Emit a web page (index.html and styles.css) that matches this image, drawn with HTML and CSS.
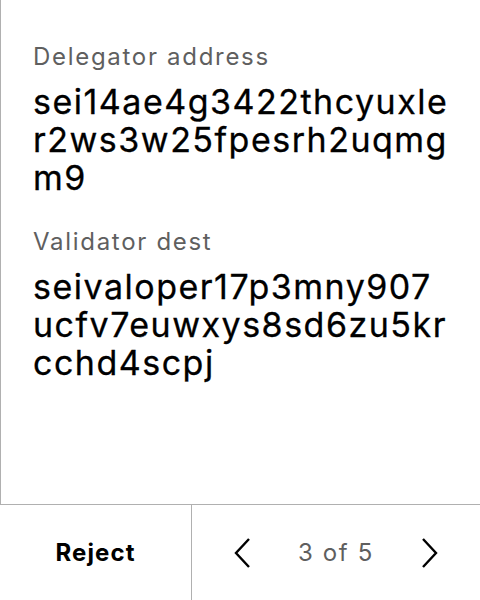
FILE: index.html
```html
<!DOCTYPE html>
<html>
<head>
<meta charset="utf-8">
<link rel="stylesheet" href="styles.css">
</head>
<body>
<div class="screen">
  <main class="content">
    <section class="field">
      <div class="label">Delegator address</div>
      <div class="value">sei14ae4g3422thcyuxler2ws3w25fpesrh2uqmgm9</div>
    </section>
    <section class="field">
      <div class="label">Validator dest</div>
      <div class="value">seivaloper17p3mny907ucfv7euwxys8sd6zu5krcchd4scpj</div>
    </section>
  </main>
  <footer class="footer">
    <button class="reject">Reject</button>
    <div class="pager">
      <svg class="chev" width="16" height="30" viewBox="0 0 16 30"><path d="M15 1 L2 15 L15 29" fill="none" stroke="#000" stroke-width="2.4"/></svg>
      <span class="count">3 of 5</span>
      <svg class="chev" width="16" height="30" viewBox="0 0 16 30"><path d="M1 1 L14 15 L1 29" fill="none" stroke="#000" stroke-width="2.4"/></svg>
    </div>
  </footer>
</div>
</body>
</html>
```
FILE: styles.css
```css
* { box-sizing: border-box; }
html, body { margin: 0; padding: 0; background: #fff; }
body { font-family: Inter, "Noto Sans", sans-serif; color: #000; }
.screen { width: 480px; height: 600px; display: flex; flex-direction: column; }
.content {
  flex: 1;
  border-left: 1px solid #b0b0b0;
  padding: 41px 30px 0 32px;
  display: flex;
  flex-direction: column;
  gap: 29px;
}
.label { font-size: 24px; color: #5f5f5f; line-height: 32px; letter-spacing: 1.7px; }
.value { font-size: 34px; font-weight: 400; line-height: 38px; letter-spacing: 1.5px; word-break: break-all; margin-top: 10px; -webkit-text-stroke: 0.3px #000; }
.footer {
  height: 96px;
  border-top: 1px solid #b0b0b0;
  display: flex;
}
.reject {
  width: 192px;
  border: 0;
  border-right: 1px solid #b0b0b0;
  background: #fff;
  font-family: inherit;
  font-weight: 700;
  font-size: 24px;
  letter-spacing: 1.1px;
  color: #000;
  padding: 0;
}
.pager { flex: 1; display: flex; align-items: center; justify-content: space-between; padding: 0 42px; }
.chev { overflow: visible; }
.count { font-size: 24px; color: #5f5f5f; letter-spacing: 1.6px; }
```
